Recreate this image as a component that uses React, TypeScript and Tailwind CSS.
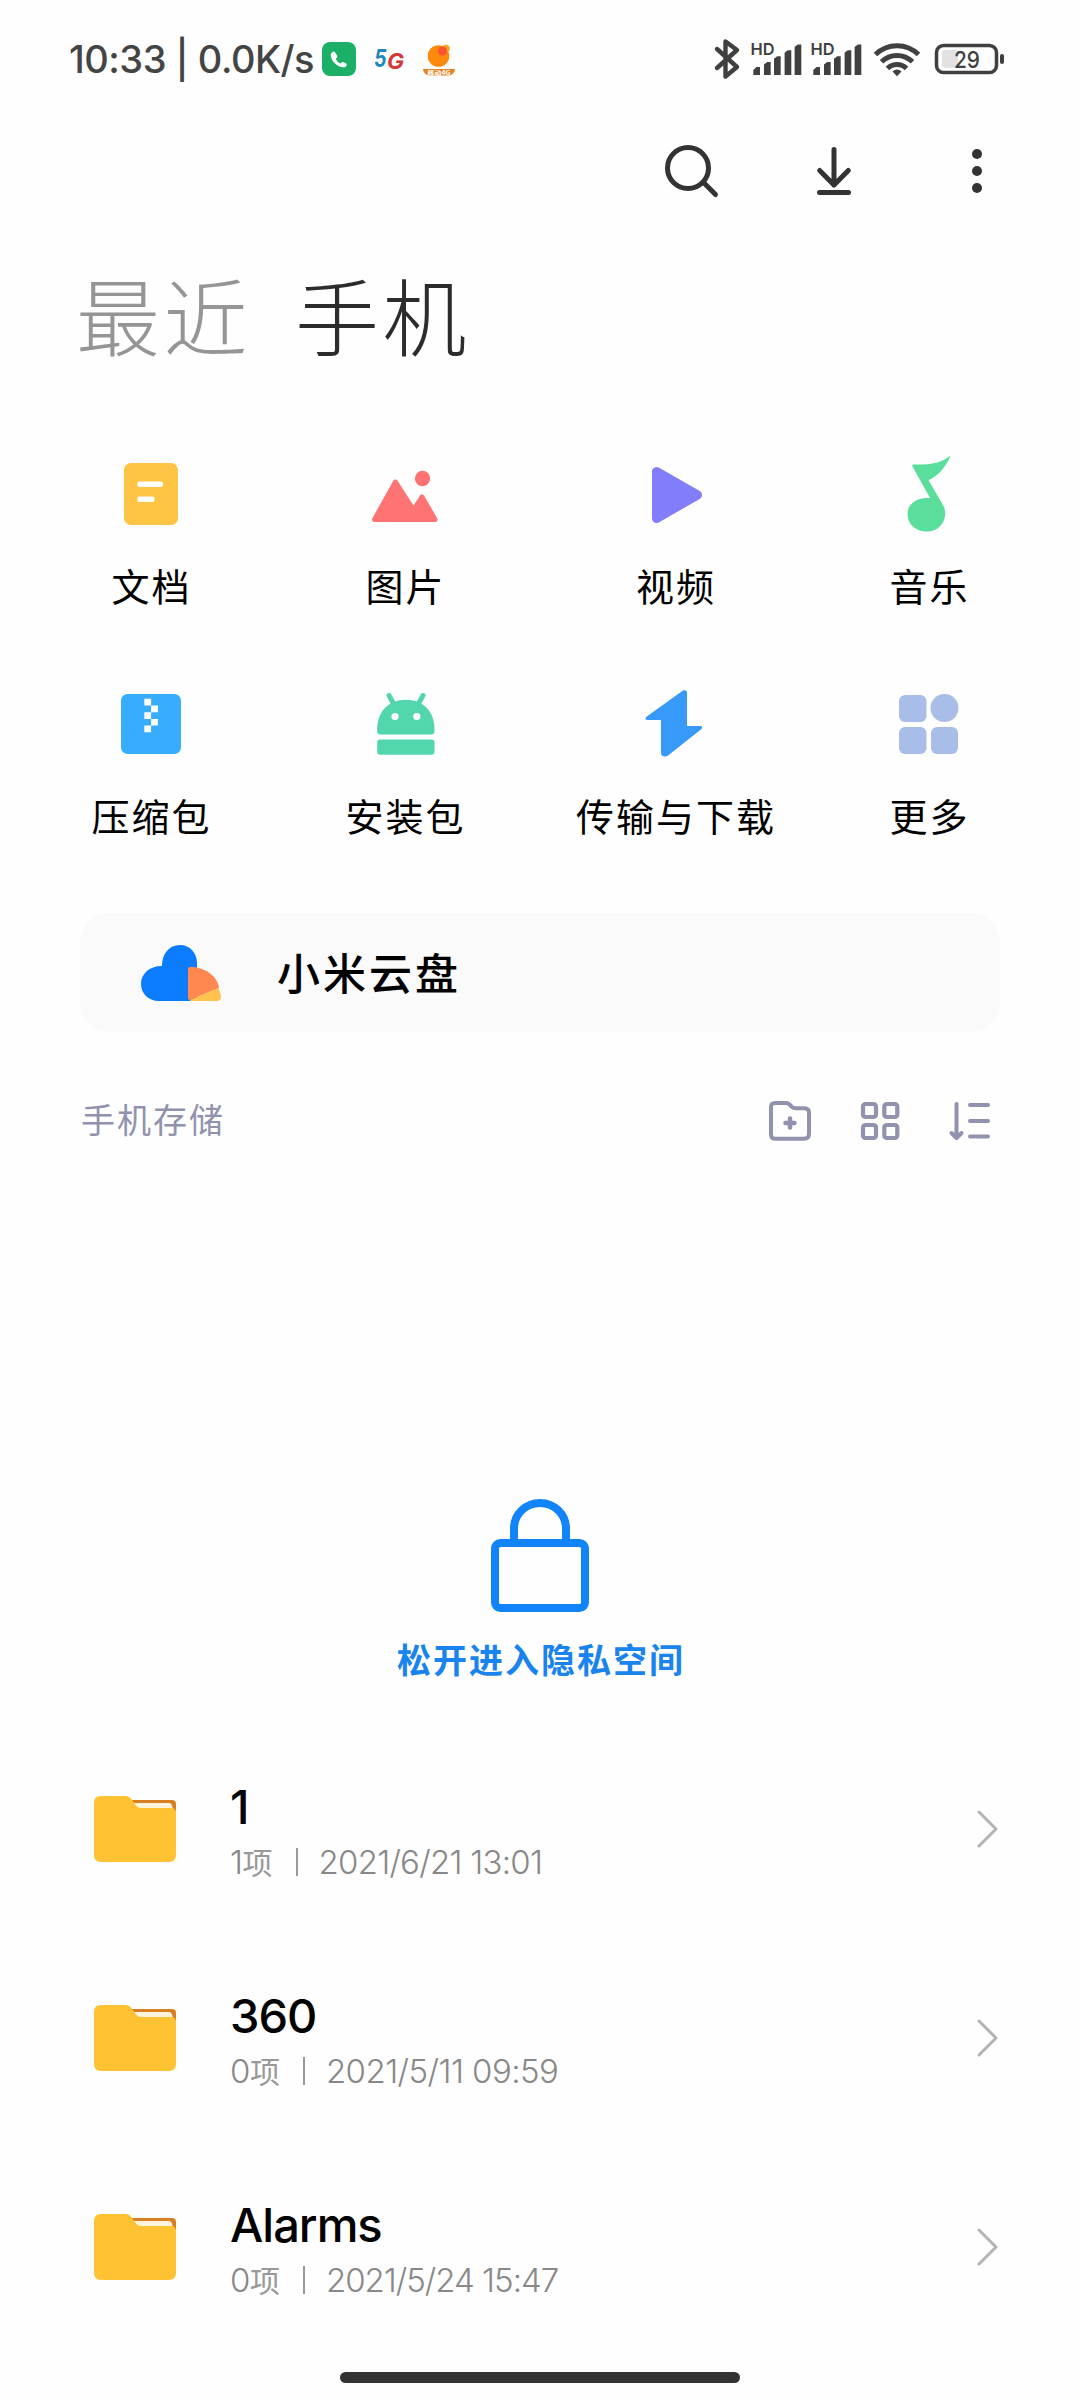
import type { ReactNode } from "react";

const CJK = "font-['Noto_Sans_CJK_SC',sans-serif]";
const LATIN = "font-['Inter','Noto_Sans_CJK_SC',sans-serif]";

function StatusApps() {
  return (
    <svg width="134" height="40" viewBox="322 39 134 40">
      <rect x="322" y="42" width="34" height="34" rx="8" fill="#1cb066" />
      <path
        d="M332.2 52.3c.9-1 2-1 2.700 0l2.200 3.300c.5.900.3 1.700-.4 2.400l-.9.900c1 2 2.600 3.600 4.600 4.600l1.200-1c.6-.5 1.300-.6 2-.2l2.400 1.300c.7.400.9 1 .6 1.800-.7 1.600-2.300 2.200-4.200 1.800-6-1.200-11-6.200-11.700-11.500-.1-1.300.4-2.500 1.500-3.400z"
        fill="#fff"
      />
      <text x="374" y="66.500" fontFamily="Inter" fontWeight="700" fontStyle="italic" fontSize="24" textLength="12.500" lengthAdjust="spacingAndGlyphs" fill="#2087ba">5</text>
      <text x="387" y="69" fontFamily="Inter" fontWeight="700" fontStyle="italic" fontSize="22" textLength="17" lengthAdjust="spacingAndGlyphs" fill="#d43838">G</text>
      <circle cx="438.500" cy="56" r="10.800" fill="#fb8a0e" />
      <circle cx="446" cy="48.500" r="3.800" fill="#fca21e" />
      <circle cx="442.500" cy="51" r="4.600" fill="#fb5530" />
      <path d="M423 69h32c-.5 4-3 6.500-7 6.500h-18c-4 0-6.500-2.500-7-6.500z" fill="#e0862a" />
      <text x="427.500" y="74.500" fontFamily="Noto Sans CJK SC" fontWeight="700" fontSize="6" textLength="23" lengthAdjust="spacingAndGlyphs" fill="#fff">移动4G</text>
    </svg>
  );
}

function Signal({ x }: { x: number }) {
  return (
    <g transform={`translate(${x} 0)`}>
      <text x="750.500" y="55" fontFamily="Inter" fontWeight="600" fontSize="16.500" textLength="24" lengthAdjust="spacingAndGlyphs">HD</text>
      <path d="M753.300 75v-5l3.200-3h3.500V75zM764 75V64.500l3.200-2.500h3.500V75zM774 75V58.700l3.200-2.500h3.500V75zM784.600 75V52.700l3.200-2.500h3.500V75zM794.600 75V47l3.200-2.500h3.500V75z" />
    </g>
  );
}

function StatusSystem() {
  return (
    <svg width="294" height="44" viewBox="712 37 294 44" fill="#404040">
      <path d="M717 49l20 18-11.500 9.500V41.500L737 50 717 68" fill="none" stroke="#404040" strokeWidth="4.400" strokeLinecap="round" strokeLinejoin="round" />
      <Signal x={0} />
      <Signal x={60} />
      <g fill="none" stroke="#404040" strokeWidth="5">
        <path d="M875.500 54.500a30.500 30.500 0 0 1 43 0" />
        <path d="M881.500 61.800a22 22 0 0 1 31 0" />
        <path d="M887.500 68.500a13.500 13.500 0 0 1 19 0" />
      </g>
      <path d="M892.500 71.500q4.500-4 9 0l-4.500 4.700z" />
      <rect x="936.500" y="45.500" width="60" height="27" rx="7" fill="none" stroke="#404040" strokeWidth="3.500" />
      <path d="M945 50h13v18h-13q-3 0-3-3V53q0-3 3-3z" fill="#e2e2e2" />
      <rect x="1000" y="54" width="4" height="10" rx="2" />
      <text x="954" y="67.500" fontFamily="Inter" fontWeight="500" fontSize="23" textLength="26" lengthAdjust="spacingAndGlyphs">29</text>
    </svg>
  );
}

const categories: { label: string; icon: ReactNode }[] = [
  {
    label: "文档",
    icon: (
      <svg width="80" height="80" viewBox="111 454 80 80">
        <rect x="124" y="463" width="54" height="62" rx="7" fill="#fec444" />
        <rect x="137.500" y="481.500" width="25.500" height="5.500" rx="1.800" fill="#fff" />
        <rect x="137.500" y="496.500" width="17" height="5.500" rx="1.800" fill="#fff" />
      </svg>
    ),
  },
  {
    label: "图片",
    icon: (
      <svg width="80" height="80" viewBox="364.500 454 80 80" fill="#ff7374">
        <circle cx="422" cy="478.500" r="7.700" />
        <path d="M374 519.500L395 482l18 28 8.500-13L434.500 519.500z" stroke="#ff7374" strokeWidth="5" strokeLinejoin="round" />
      </svg>
    ),
  },
  {
    label: "视频",
    icon: (
      <svg width="80" height="80" viewBox="635 454 80 80">
        <path d="M656.500 471.500v47L697.500 495z" fill="#827dfb" stroke="#827dfb" strokeWidth="9" strokeLinejoin="round" />
      </svg>
    ),
  },
  {
    label: "音乐",
    icon: (
      <svg width="80" height="80" viewBox="888.500 454 80 80">
        <path
          d="M913 464.500c12 .5 27-.5 35.500-8 1-.7 1.500 0 1 1-5 9.500-11 18-21.500 22.500L943.500 507c4 10-2 24.500-17.500 24.500-11 0-19-7.500-19-17.500 0-9.500 8-17 22.500-16L912 466.500c-.5-1.200-.2-2 1-2z"
          fill="#59df9b"
        />
      </svg>
    ),
  },
  {
    label: "压缩包",
    icon: (
      <svg width="80" height="80" viewBox="111 684 80 80">
        <rect x="121" y="694" width="60" height="60" rx="6.500" fill="#38adfe" />
        <path d="M144.300 698.800h6.800v6.800h6.800v6.600h-6.800v6.800h6.800v6.600h-6.800v6.600h-6.800v-6.600h6.800V719h-6.800v-6.800h6.800v-6.600h-6.800z" fill="#fff" />
      </svg>
    ),
  },
  {
    label: "安装包",
    icon: (
      <svg width="80" height="80" viewBox="364.500 684 80 80" fill="#52d6ae">
        <path d="M388.500 695.500l5 9M422.500 695.500l-5 9" stroke="#52d6ae" strokeWidth="5" strokeLinecap="round" />
        <path d="M376.700 729c0-17 11-29.300 28.700-29.300S434 712 434 729v2.500q0 3-3 3h-51.300q-3 0-3-3z" />
        <rect x="376.700" y="739.500" width="57.300" height="15.300" rx="3" />
        <circle cx="394.500" cy="716.500" r="3.600" fill="#fff" />
        <circle cx="416.300" cy="716.500" r="3.600" fill="#fff" />
      </svg>
    ),
  },
  {
    label: "传输与下载",
    icon: (
      <svg width="80" height="80" viewBox="635 684 80 80">
        <path
          d="M683 690.500q4-1.500 4 3V726h13.500c2 0 2.200 2 1 3L668 755.500c-3 2-7 1-7-2.500V720h-14c-1.800 0-2-2-.5-3.200z"
          fill="#389af8"
        />
      </svg>
    ),
  },
  {
    label: "更多",
    icon: (
      <svg width="80" height="80" viewBox="889 684 80 80" fill="#a8bee9">
        <rect x="899" y="695" width="27.500" height="27" rx="6" />
        <circle cx="944.500" cy="708" r="14" />
        <rect x="899" y="727" width="27.500" height="27" rx="6" />
        <rect x="931" y="727" width="27" height="27" rx="6" />
      </svg>
    ),
  },
];

const folders = [
  { name: "1", count: "1", date: "2021/6/21 13:01", dateSpacing: "tracking-[-0.75px]" },
  { name: "360", count: "0", date: "2021/5/11 09:59", dateSpacing: "tracking-[-0.55px]" },
  { name: "Alarms", count: "0", date: "2021/5/24 15:47", dateSpacing: "tracking-[-1px]" },
];

function FolderIcon() {
  return (
    <svg width="82" height="66" viewBox="0 0 82 66" className="shrink-0">
      <path d="M36 4h42q4 0 4 4v8H36z" fill="#d97f23" />
      <path d="M38 7h37q2.500 0 3 2.500l1 4H40z" fill="#fff3dc" />
      <path d="M7 0h25q3 0 5 2.500l5 7q2 2.500 5 2.500h30q5 0 5 5v42q0 7-7 7H7q-7 0-7-7V7q0-7 7-7z" fill="#ffc233" />
    </svg>
  );
}

export default function App() {
  return (
    <div className={`flex h-[2400px] w-[1080px] flex-col overflow-hidden bg-[#fefefe] text-black ${CJK}`}>
      <header className="flex h-[118px] items-center justify-between pr-[74px] pl-[69px] text-[#444]">
        <div className="flex items-center">
          <span className={`w-[253px] text-[38px] leading-none font-medium tracking-[-0.5px] whitespace-pre ${LATIN}`}>10:33 | 0.0K/s</span>
          <StatusApps />
        </div>
        <StatusSystem />
      </header>

      <div className="flex h-[106px] items-center justify-end gap-[81px] pr-[72px]">
        <svg width="62" height="60" viewBox="660 141 62 60" fill="none" stroke="#333" strokeWidth="5">
          <circle cx="688" cy="168" r="20.500" />
          <path d="M703.500 182.500l12 12" strokeLinecap="round" />
        </svg>
        <svg width="62" height="60" viewBox="803 141 62 60" fill="none" stroke="#333" strokeWidth="5" strokeLinecap="round" strokeLinejoin="round">
          <path d="M834 149.500V185M819.700 170.500L834 185l14.300-14.500M819.500 192.500h29" />
        </svg>
        <svg width="62" height="60" viewBox="946 141 62 60" fill="#333">
          <circle cx="977" cy="154" r="5" />
          <circle cx="977" cy="171" r="5" />
          <circle cx="977" cy="188" r="5" />
        </svg>
      </div>

      <nav className="flex h-[188px] items-center gap-[44px] pb-[8px] pl-[76px] text-[84px] leading-none font-light tracking-[3.5px]">
        <span className="text-[#959595]">最近</span>
        <span className="text-[#2c2c2c]">手机</span>
      </nav>

      <section className="mt-[42px] grid grid-cols-[254px_254px_287px_220px] gap-y-[72px] pl-[23.5px]">
        {categories.map((c) => (
          <div key={c.label} className="flex flex-col items-center gap-[26px] pb-[2px]">
            {c.icon}
            <span className="h-[50px] pl-[2px] text-[38px] leading-[50px] tracking-[2px]">{c.label}</span>
          </div>
        ))}
      </section>

      <div className="mx-[80px] mt-[71px] flex h-[119px] shrink-0 items-center rounded-[30px] bg-[#fafafa] pl-[61px]">
        <svg width="80" height="56" viewBox="141 945 80 56">
          <path d="M159 1001c-11 0-18-8-18-17 0-10 8-18 21-18 0-12 7-21 18-21 10 0 17 8 17 18v38z" fill="#0a7cfd" />
          <path d="M188 969q0-2 2-2c14 0 27 8 29 21l-29 12q-2 0-2-2z" fill="#ff8750" />
          <path d="M190 1000l28.500-12q2 5 2.500 9 0 4-4 4h-27z" fill="#fec24d" />
        </svg>
        <span className="ml-[56px] pb-[4px] text-[43px] leading-[60px] font-medium tracking-[3px]">小米云盘</span>
      </div>

      <div className="mt-[58px] flex h-[60px] shrink-0 items-center justify-between pr-[88px] pl-[81px]">
        <span className="pb-[2px] text-[34px] leading-none tracking-[2px] text-[#9192ad]">手机存储</span>
        <div className="flex gap-[46px] pt-[2px] text-[#9192ad]">
          <svg width="44" height="44" viewBox="768 1099 44 44" fill="none" stroke="currentColor" strokeWidth="4" strokeLinecap="round" strokeLinejoin="round">
            <path d="M775 1103h11q2 0 3.500 1.500l2.500 2.500q1.500 1.300 3.500 1.300h9q4.500 0 4.500 4.500v21q0 5-5 5h-29q-4 0-4-4.500V1107q0-4 4-4z" />
            <path d="M790 1118.500v9M785.500 1123h9" strokeWidth="4.500" />
          </svg>
          <svg width="44" height="44" viewBox="858 1099 44 44" fill="none" stroke="currentColor" strokeWidth="4.200">
            <rect x="863" y="1104" width="13" height="13" rx="2.500" />
            <rect x="884.300" y="1104" width="13" height="13" rx="2.500" />
            <rect x="863" y="1125" width="13" height="13" rx="2.500" />
            <rect x="884.300" y="1125" width="13" height="13" rx="2.500" />
          </svg>
          <svg width="44" height="44" viewBox="948 1099 44 44" fill="none" stroke="currentColor" strokeWidth="4" strokeLinecap="round" strokeLinejoin="round">
            <path d="M956.500 1104v34M951.500 1133l5 5 5-5M970 1105h18M970 1121h18M970 1136.500h18" />
          </svg>
        </div>
      </div>

      <div className="mt-[349px] flex shrink-0 flex-col items-center">
        <svg width="98" height="113" viewBox="0 0 98 113" fill="none" stroke="#1284fa" strokeWidth="8">
          <path d="M23 43V29.500a26 25.500 0 0 1 52 0V43" />
          <rect x="4" y="44" width="90" height="65" rx="5.500" />
        </svg>
        <span className="mt-[22px] mb-[1px] h-[50px] pl-[2px] text-[34px] leading-[50px] font-bold tracking-[2px] text-[#1a84ee]">松开进入隐私空间</span>
      </div>

      <ul className="mt-[39px]">
        {folders.map((f) => (
          <li key={f.name} className={`flex h-[209px] items-center pr-[82px] pl-[94px] ${LATIN}`}>
            <FolderIcon />
            <div className="ml-[54px] flex-1 pt-[6px]">
              <div className="h-[56px] text-[47px] leading-[56px] font-medium tracking-[-1px]">{f.name}</div>
              <div className="mt-[5px] flex h-[44px] items-center text-[33px] leading-[44px] font-light text-[#888]">
                <span className="tracking-[-0.5px]">{f.count}</span>
                <span className={`pb-[2px] text-[30px] font-normal text-[#999] ${CJK}`}>项</span>
                <span className="mr-[21px] ml-[23px] h-[28px] w-[2px] bg-[#999]" />
                <span className={f.dateSpacing}>{f.date}</span>
              </div>
            </div>
            <svg width="22" height="40" viewBox="0 0 22 40" fill="none" stroke="#b3b3b3" strokeWidth="3" strokeLinecap="round" strokeLinejoin="round">
              <path d="M3 3l17 17L3 37" />
            </svg>
          </li>
        ))}
      </ul>

      <div className="mx-auto mt-[21px] h-[11px] w-[400px] shrink-0 rounded-full bg-[#333]" />
    </div>
  );
}
